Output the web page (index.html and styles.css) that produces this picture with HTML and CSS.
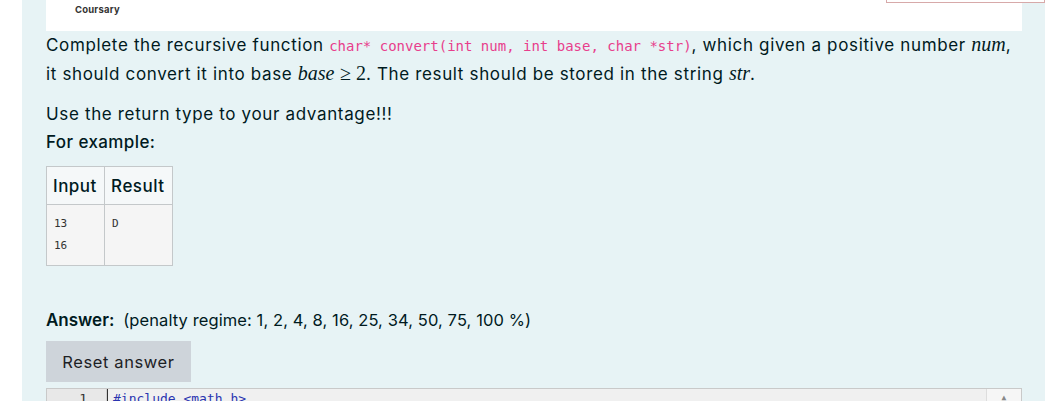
FILE: index.html
```html
<!DOCTYPE html>
<html>
<head>
<meta charset="utf-8">
<link rel="stylesheet" href="styles.css">
</head>
<body>
<div class="panel">
  <div class="topcard"><span class="brand">Coursary</span></div>
  <div class="flag"></div>
  <p class="para">Complete the recursive function <code>char* convert(int num, int base, char *str)</code>, which given a positive number <span class="math">num</span>, it should convert it into base <span class="math">base</span> <span class="mrm">≥ 2</span>. The result should be stored in the string <span class="math">str</span>.</p>
  <p class="para2">Use the return type to your advantage!!!</p>
  <h4 class="example">For example:</h4>
  <table class="examples">
    <thead><tr><th>Input</th><th>Result</th></tr></thead>
    <tbody><tr><td><pre>13
16</pre></td><td><pre>D</pre></td></tr></tbody>
  </table>
  <div class="answer"><b>Answer:</b> <span class="penalty">(penalty regime: 1, 2, 4, 8, 16, 25, 34, 50, 75, 100 %)</span></div>
  <div><button class="reset">Reset answer</button></div>
  <div class="editor">
    <div class="gutter">1</div>
    <div class="code"><span class="directive">#include</span> <span class="header">&lt;math.h&gt;</span></div>
    <div class="scroll">▲</div>
  </div>
</div>
</body>
</html>
```

FILE: styles.css
```css
html, body {
  margin: 0;
  padding: 0;
  background: #ffffff;
  height: 401px;
  overflow: hidden;
}
body {
  font-family: "Inter", sans-serif;
  color: #001a1e;
}
.panel {
  position: relative;
  margin-left: 22px;
  width: 976px;
  padding: 0 23px 0 24px;
  height: 401px;
  overflow: hidden;
  background: #e7f3f5;
}
.topcard {
  height: 31px;
  background: #ffffff;
  padding-left: 29px;
  box-sizing: border-box;
  padding-top: 0;
  line-height: 14px;
}
.brand {
  font-family: "Inter", sans-serif;
  font-weight: 700;
  font-size: 9.5px;
  letter-spacing: 0.2px;
  color: #333;
}
.flag {
  position: absolute;
  left: 864px;
  top: -20px;
  width: 157px;
  height: 21px;
  background: #fff;
  border: 1px solid #d7a9a9;
}
.para, .para2, .example, .answer {
  font-size: 17px;
  line-height: 27px;
  letter-spacing: 0.65px;
}
.para {
  margin: 0;
}
code {
  font-family: "DejaVu Sans Mono", monospace;
  font-size: 14px;
  letter-spacing: 0;
  color: #e83e8c;
}
.math {
  font-family: "Liberation Serif", serif;
  font-style: italic;
  font-size: 20px;
  letter-spacing: 0;
}
.mrm {
  font-family: "Liberation Serif", serif;
  font-size: 20px;
  letter-spacing: 0;
}
.para2 {
  margin: 13px 0 0;
}
.example {
  margin: 1px 0 0;
  font-weight: 500;
  letter-spacing: 0.4px;
}
.examples {
  margin-top: 10px;
  border-collapse: collapse;
  width: 127px;
}
.examples th {
  font-weight: 500;
  font-size: 17px;
  letter-spacing: 0.5px;
  text-align: left;
  height: 37px;
  padding: 0 6px;
  border: 1px solid #c4c8ca;
  background: #f5f8f9;
}
.examples td {
  vertical-align: top;
  padding: 8px 7px 6px;
  border: 1px solid #c4c8ca;
  background: #f5f5f5;
  height: 46px;
}
.examples pre {
  margin: 0;
  font-family: "DejaVu Sans Mono", monospace;
  font-size: 11px;
  line-height: 22px;
  color: #333;
}
.answer {
  margin-top: 41px;
  letter-spacing: 0;
}
.answer b {
  font-weight: 600;
  margin-right: 4px;
}
.penalty {
  font-size: 16.5px;
  letter-spacing: 0.1px;
}
.reset {
  margin-top: 7px;
  font-family: "Inter", sans-serif;
  font-size: 16.5px;
  letter-spacing: 0.6px;
  color: #1d2125;
  background: #ced4da;
  border: none;
  height: 41px;
  width: 145px;
  padding: 0;
}
.editor {
  margin-top: 6px;
  display: flex;
  border: 1px solid #c9c9c9;
  height: 30px;
  background: #f0f0f0;
  font-family: "DejaVu Sans Mono", monospace;
  font-size: 13px;
}
.gutter {
  width: 40px;
  padding-right: 19px;
  text-align: right;
  background: #e8e8e8;
  border-right: 1px solid #d0d0d0;
  color: #333;
  padding-top: 2px;
}
.code {
  flex: 1;
  padding-left: 5px;
  padding-top: 2px;
  border-left: 1px solid #333;
}
.directive, .header { color: #2a35b0; }
.scroll {
  width: 34px;
  background: #f6f6f6;
  border-left: 1px solid #ddd;
  text-align: center;
  font-size: 8px;
  color: #888;
  padding-top: 4px;
}
```
